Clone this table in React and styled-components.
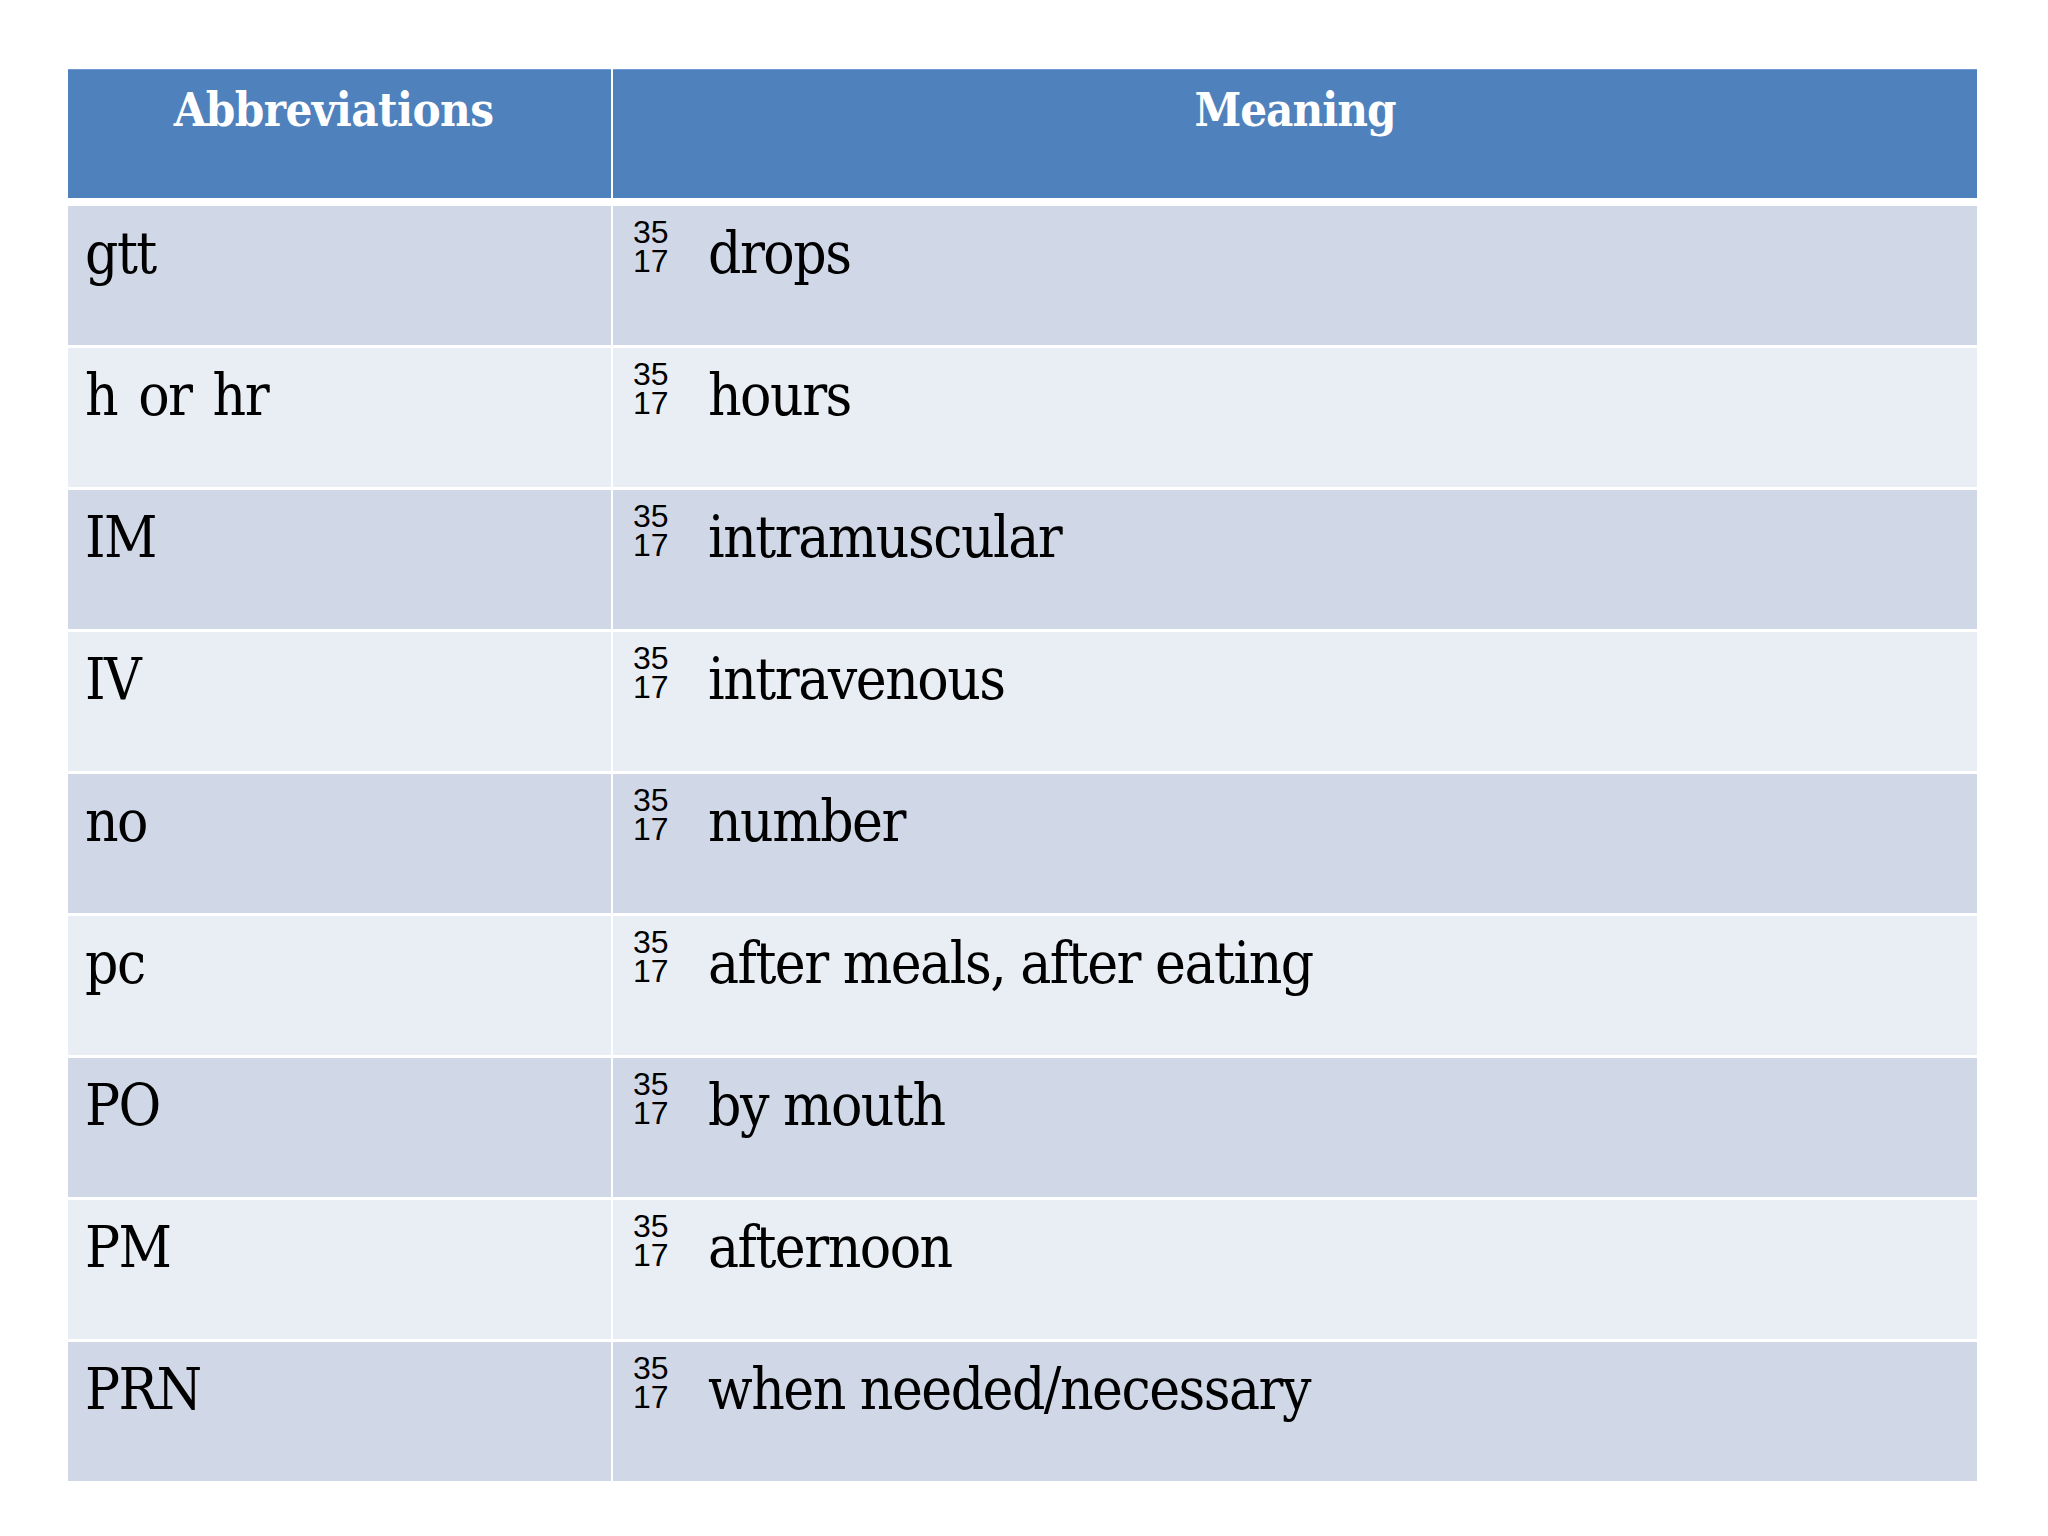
import React from "react";
import styled, { createGlobalStyle } from "styled-components";

const GlobalStyle = createGlobalStyle`
  html, body {
    margin: 0;
    padding: 0;
    background: #ffffff;
  }
`;

const Page = styled.div`
  width: 2048px;
  height: 1536px;
  padding: 69px 0 0 68px;
  box-sizing: border-box;
  background: #ffffff;
`;

const Table = styled.div`
  display: grid;
  grid-template-columns: 543px 1364px;
  column-gap: 2px;
  row-gap: 3px;
  width: 1909px;
`;

const HeadCell = styled.div`
  height: 129px;
  margin-bottom: 5px;
  box-sizing: border-box;
  padding: 17px ${(p) => (p.$shift ? "12px" : "0")} 0 0;
  background: #4f81bd;
  border-top: 1px solid #6f9bd0;
  color: #ffffff;
  text-align: center;
  font-family: "DejaVu Serif Condensed", "DejaVu Serif", serif;
  font-weight: bold;
  font-size: 47px;
  line-height: 46px;
  letter-spacing: ${(p) => (p.$shift ? "-0.6px" : "-1px")};
`;

const Cell = styled.div`
  height: 139px;
  box-sizing: border-box;
  background: ${(p) => (p.$odd ? "#d0d8e8" : "#e9edf4")};
  color: #000000;
  font-family: "DejaVu Serif Condensed", "DejaVu Serif", serif;
  font-size: 58px;
  line-height: 58px;
  letter-spacing: -1.5px;
`;

const AbbrCell = styled(Cell)`
  padding: 18px 0 0 17px;
  word-spacing: 6px;
`;

const MeaningCell = styled(Cell)`
  display: flex;
  align-items: flex-start;
  padding: 12px 0 0 20px;
`;

const Marker = styled.div`
  display: flex;
  flex-direction: column;
  width: 75px;
  flex-shrink: 0;
  font-family: "Liberation Sans", Arial, sans-serif;
  font-size: 32px;
  line-height: 29px;
  letter-spacing: 0;
`;

const MarkerLine = styled.span`
  display: block;
  height: 29px;
`;

const MeaningText = styled.span`
  margin-top: 6px;
`;

const rows = [
  ["gtt", "drops"],
  ["h or hr", "hours"],
  ["IM", "intramuscular"],
  ["IV", "intravenous"],
  ["no", "number"],
  ["pc", "after meals, after eating"],
  ["PO", "by mouth"],
  ["PM", "afternoon"],
  ["PRN", "when needed/necessary"],
];

export default function App() {
  return (
    <>
      <GlobalStyle />
      <Page>
        <Table>
          <HeadCell $shift>Abbreviations</HeadCell>
          <HeadCell>Meaning</HeadCell>
          {rows.map(([abbr, meaning], i) => (
            <React.Fragment key={abbr}>
              <AbbrCell $odd={i % 2 === 0}>{abbr}</AbbrCell>
              <MeaningCell $odd={i % 2 === 0}>
                <Marker>
                  <MarkerLine>35</MarkerLine>
                  <MarkerLine>17</MarkerLine>
                </Marker>
                <MeaningText>{meaning}</MeaningText>
              </MeaningCell>
            </React.Fragment>
          ))}
        </Table>
      </Page>
    </>
  );
}
